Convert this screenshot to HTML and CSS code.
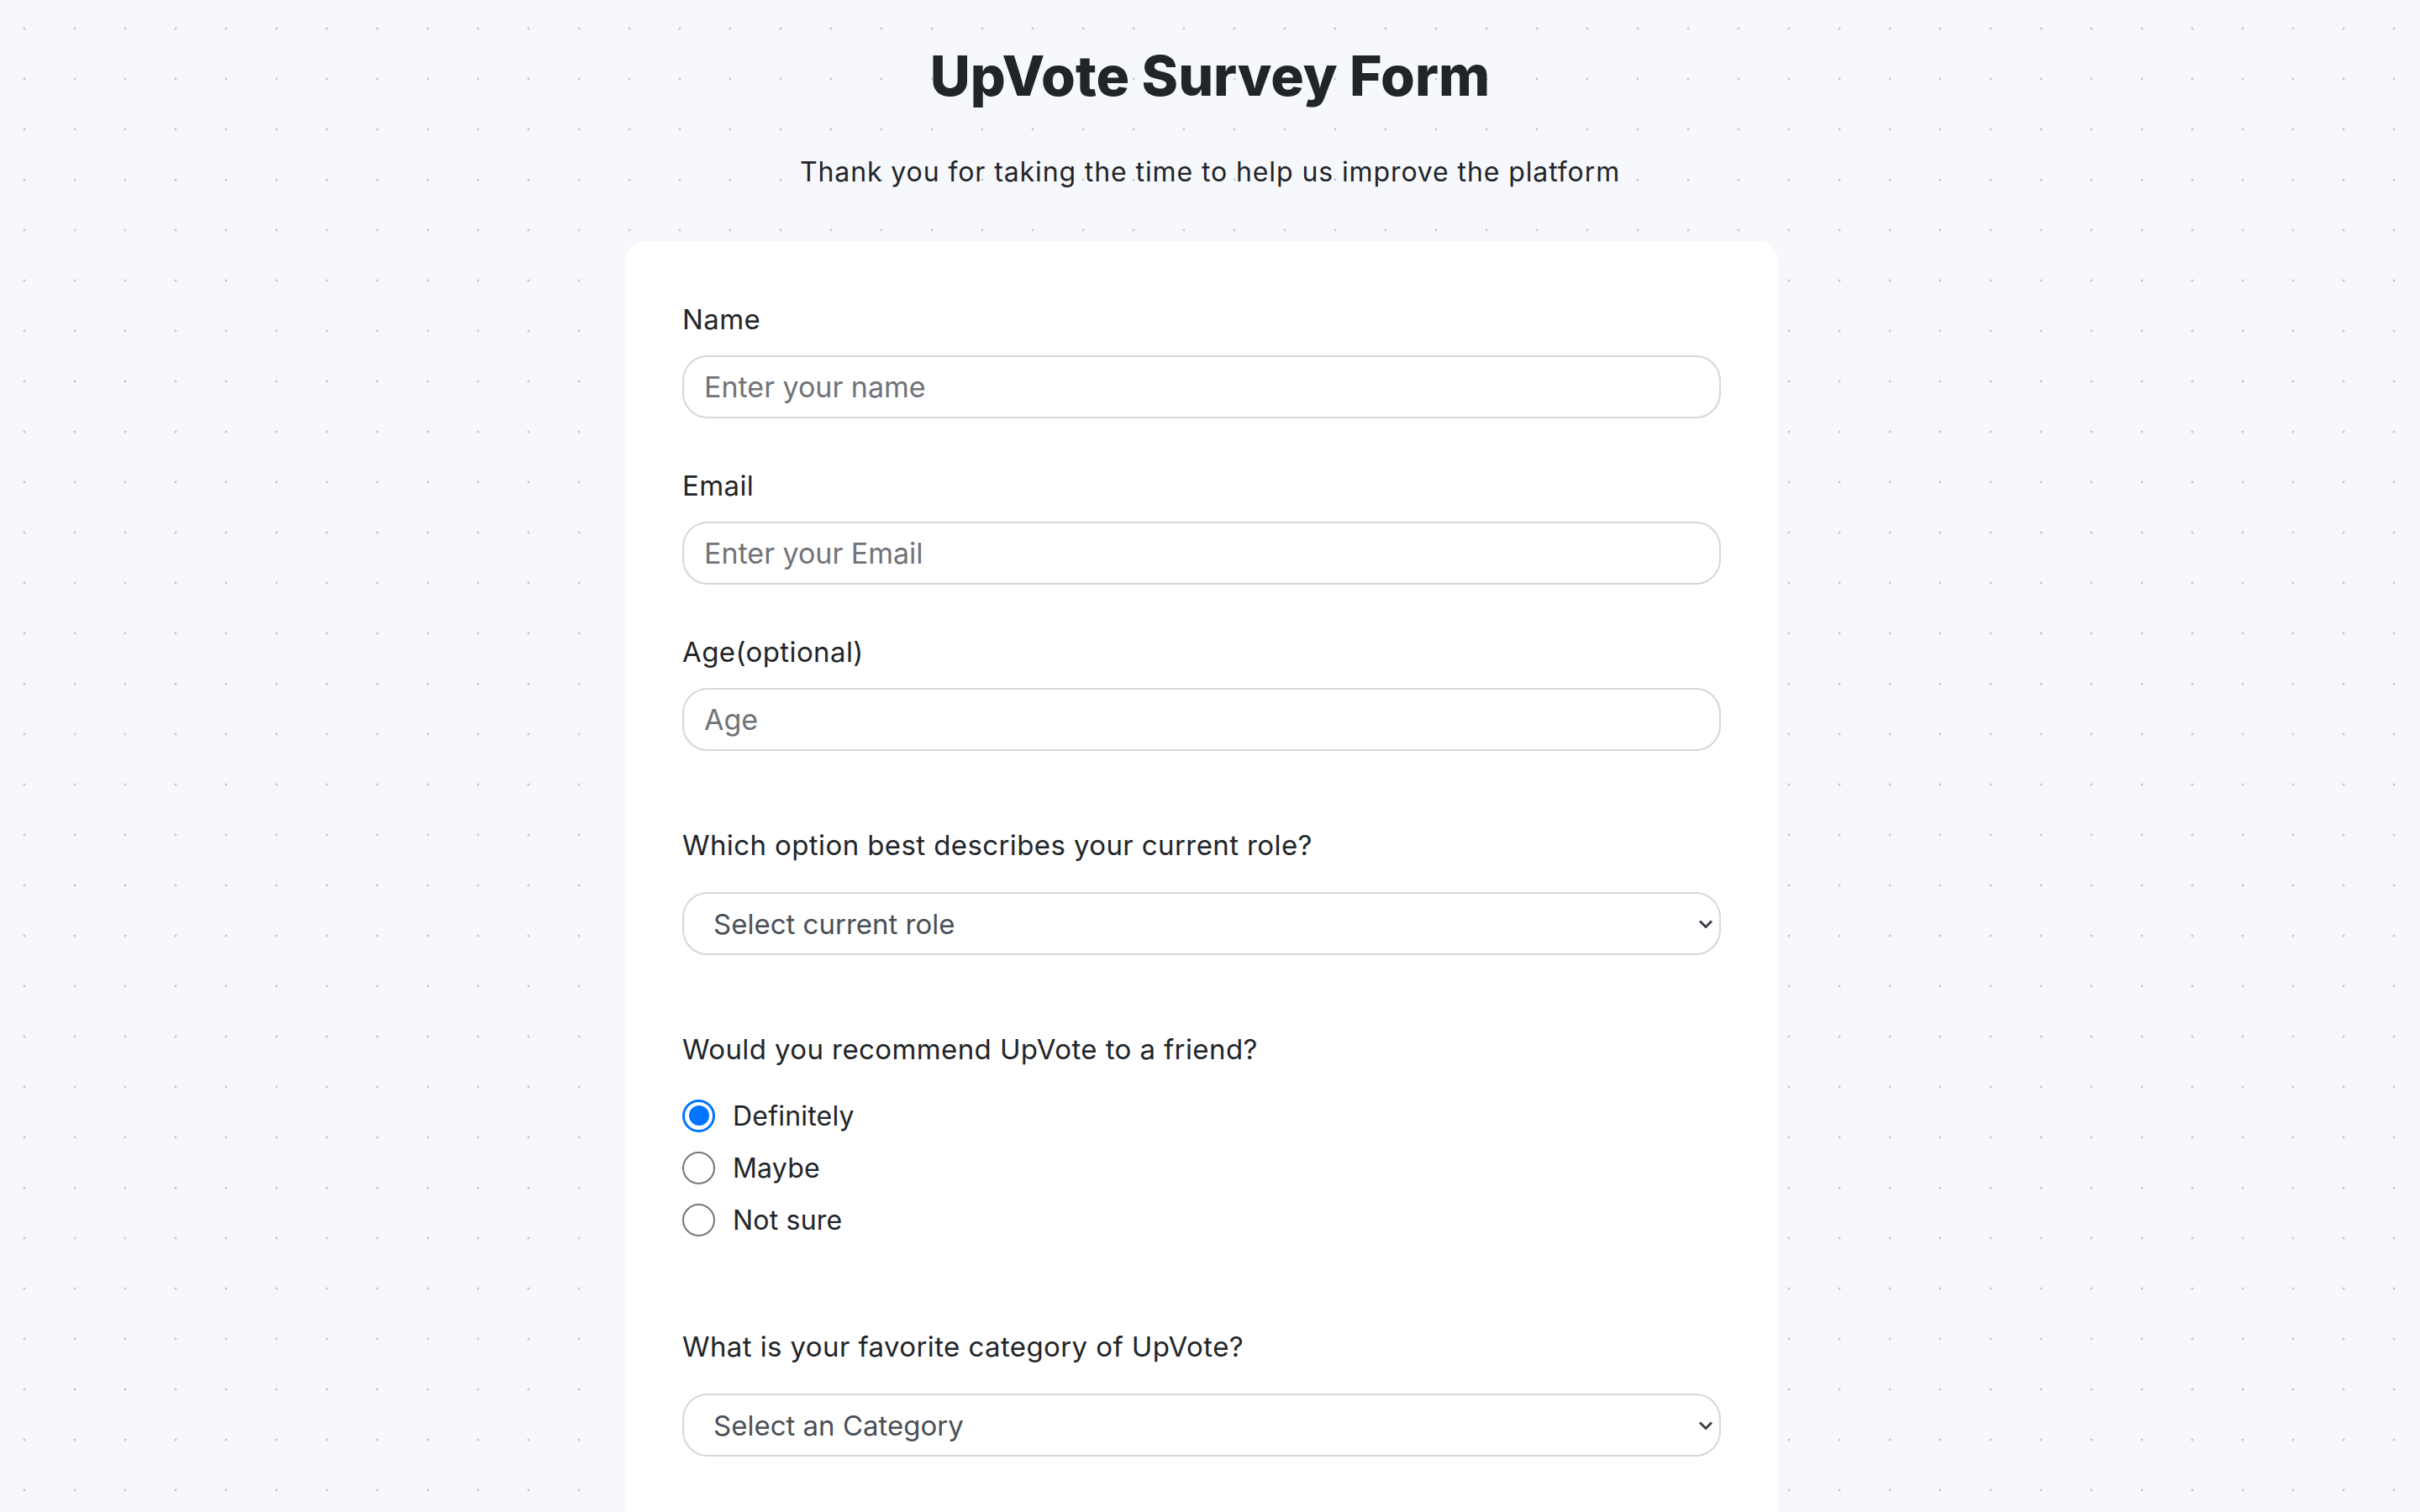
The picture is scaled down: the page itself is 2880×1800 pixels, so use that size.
FILE: index.html
```html
<!DOCTYPE html>
<html lang="en">
<head>
<meta charset="utf-8">
<title>UpVote Survey Form</title>
<link rel="stylesheet" href="styles.css">
</head>
<body>
<main class="page">
  <h1 class="title">UpVote Survey Form</h1>
  <p class="subtitle">Thank you for taking the time to help us improve the platform</p>
  <form class="card">
    <div class="field">
      <label class="label" for="name">Name</label>
      <input class="control" id="name" type="text" placeholder="Enter your name">
    </div>
    <div class="field">
      <label class="label" for="email">Email</label>
      <input class="control" id="email" type="email" placeholder="Enter your Email">
    </div>
    <div class="field">
      <label class="label" for="age">Age(optional)</label>
      <input class="control" id="age" type="number" placeholder="Age">
    </div>
    <div class="field field-spaced">
      <label class="label label-wide" for="role">Which option best describes your current role?</label>
      <div class="select-wrap">
        <select class="control select" id="role">
          <option>Select current role</option>
          <option>Student</option>
          <option>Full Time Job</option>
          <option>Full Time Learner</option>
          <option>Prefer not to say</option>
          <option>Other</option>
        </select>
        <svg class="chevron" viewBox="0 0 18 11" aria-hidden="true"><path d="M2 2 L9 9 L16 2" fill="none" stroke="#3b3f45" stroke-width="3"/></svg>
      </div>
    </div>
    <div class="field field-spaced">
      <span class="label label-group">Would you recommend UpVote to a friend?</span>
      <div class="options">
        <label class="option"><input class="radio" type="radio" name="rec" checked> Definitely</label>
        <label class="option"><input class="radio" type="radio" name="rec"> Maybe</label>
        <label class="option"><input class="radio" type="radio" name="rec"> Not sure</label>
      </div>
    </div>
    <div class="field field-after-options">
      <label class="label label-wide" for="cat">What is your favorite category of UpVote?</label>
      <div class="select-wrap">
        <select class="control select" id="cat">
          <option>Select an Category</option>
          <option>Challenges</option>
          <option>Projects</option>
          <option>Community</option>
          <option>Open Source</option>
        </select>
        <svg class="chevron" viewBox="0 0 18 11" aria-hidden="true"><path d="M2 2 L9 9 L16 2" fill="none" stroke="#3b3f45" stroke-width="3"/></svg>
      </div>
    </div>
  </form>
</main>
</body>
</html>
```

FILE: styles.css
```css
html, body {
  margin: 0;
  padding: 0;
}

body {
  background-color: #f7f8fc;
  background-image: radial-gradient(circle, #bfc2d0 1.1px, transparent 1.7px);
  background-size: 60px 60px;
  background-position: -1px 4px;
  font-family: Inter, "Noto Sans", sans-serif;
  color: #212529;
  min-height: 100vh;
}

.page {
  display: flex;
  flex-direction: column;
  align-items: center;
  padding-top: 50px;
}

.title {
  margin: 0;
  font-size: 66px;
  line-height: 80px;
  font-weight: 800;
  color: #212529;
}

.subtitle {
  margin: 51px 0 0;
  font-size: 32px;
  line-height: 48px;
  letter-spacing: 0.9px;
  color: #212529;
}

.card {
  align-self: flex-start;
  margin-left: calc(50% - 696px);
  margin-top: 58px;
  width: 1372px;
  box-sizing: border-box;
  padding: 69px 68px 90px;
  background: #ffffff;
  border-radius: 24px;
  display: flex;
  flex-direction: column;
}

.field {
  display: flex;
  flex-direction: column;
}

.field + .field {
  margin-top: 56px;
}

.field + .field-spaced {
  margin-top: 88px;
}

.field + .field-after-options {
  margin-top: 96px;
}

.label {
  display: block;
  font-size: 33px;
  line-height: 48px;
  letter-spacing: 0.4px;
  margin-bottom: 19px;
  color: #212529;
}

.label-wide {
  margin-bottom: 32px;
}

.label-group {
  margin-bottom: 24px;
}

.control {
  display: block;
  width: 100%;
  box-sizing: border-box;
  height: 75px;
  margin: 0;
  border: 2px solid #d3d7de;
  border-radius: 30px;
  padding: 0 24px;
  font-family: inherit;
  font-size: 34px;
  color: #212529;
  background: #ffffff;
  outline: none;
}

.control::placeholder {
  color: #707378;
}

.select-wrap {
  position: relative;
}

.select {
  appearance: none;
  -webkit-appearance: none;
  padding-left: 35px;
  font-size: 33px;
  color: #495057;
}

.chevron {
  position: absolute;
  right: 9px;
  top: 50%;
  width: 18px;
  height: 11px;
  transform: translateY(-50%);
  pointer-events: none;
}

.options {
  display: flex;
  flex-direction: column;
}

.option {
  display: flex;
  align-items: center;
  gap: 21px;
  height: 62px;
  font-size: 32px;
  letter-spacing: 0.2px;
  color: #212529;
}

.radio {
  appearance: none;
  -webkit-appearance: none;
  margin: 0;
  width: 39px;
  height: 39px;
  box-sizing: border-box;
  border: 2px solid #767676;
  border-radius: 50%;
  display: grid;
  place-content: center;
  background: #ffffff;
}

.radio:checked {
  border: 3px solid #0075ff;
}

.radio:checked::before {
  content: "";
  display: block;
  width: 24px;
  height: 24px;
  border-radius: 50%;
  background: #0075ff;
}
```
